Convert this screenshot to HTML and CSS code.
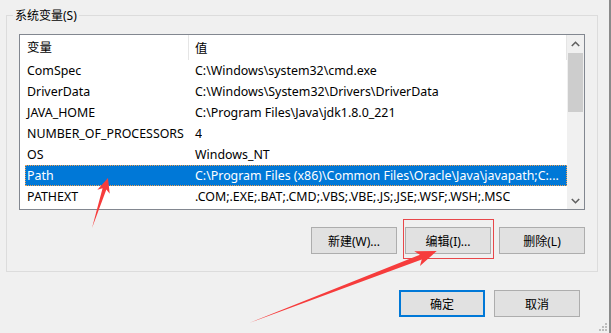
FILE: index.html
```html
<!DOCTYPE html>
<html lang="zh-CN">
<head>
    <meta charset="UTF-8">
    <title>系统变量</title>
    <link rel="stylesheet" href="styles.css">
</head>
<body>
<div class="window">
    <div class="group">
        <div class="group-title">系统变量(S)</div>

        <div class="listbox">
            <div class="list-main">
                <div class="list-head">
                    <div class="col-name">变量</div>
                    <div class="col-value">值</div>
                </div>
                <div class="rows">
                    <div class="row"><div class="col-name">ComSpec</div><div class="col-value">C:\Windows\system32\cmd.exe</div></div>
                    <div class="row"><div class="col-name">DriverData</div><div class="col-value">C:\Windows\System32\Drivers\DriverData</div></div>
                    <div class="row"><div class="col-name">JAVA_HOME</div><div class="col-value">C:\Program Files\Java\jdk1.8.0_221</div></div>
                    <div class="row"><div class="col-name">NUMBER_OF_PROCESSORS</div><div class="col-value">4</div></div>
                    <div class="row"><div class="col-name">OS</div><div class="col-value">Windows_NT</div></div>
                    <div class="row selected"><div class="col-name">Path</div><div class="col-value">C:\Program Files (x86)\Common Files\Oracle\Java\javapath;C:...</div></div>
                    <div class="row"><div class="col-name">PATHEXT</div><div class="col-value">.COM;.EXE;.BAT;.CMD;.VBS;.VBE;.JS;.JSE;.WSF;.WSH;.MSC</div></div>
                </div>
            </div>
            <div class="scrollbar">
                <div class="sb-btn">
                    <svg width="9" height="6" viewBox="0 0 9 6"><polyline points="0.8,5 4.5,1.3 8.2,5" fill="none" stroke="#606060" stroke-width="1.6"/></svg>
                </div>
                <div class="sb-track"><div class="sb-thumb"></div></div>
                <div class="sb-btn">
                    <svg width="9" height="6" viewBox="0 0 9 6"><polyline points="0.8,1 4.5,4.7 8.2,1" fill="none" stroke="#606060" stroke-width="1.6"/></svg>
                </div>
            </div>
        </div>

        <div class="group-buttons">
            <button class="btn">新建(W)...</button>
            <button class="btn">编辑(I)...</button>
            <button class="btn">删除(L)</button>
        </div>
    </div>

    <div class="dialog-buttons">
        <button class="btn btn-default">确定</button>
        <button class="btn">取消</button>
    </div>

    <svg class="grip" width="9" height="9" viewBox="0 0 9 9">
        <rect x="6" y="0" width="2" height="2" fill="#bcbcbc"/>
        <rect x="3" y="3" width="2" height="2" fill="#bcbcbc"/>
        <rect x="6" y="3" width="2" height="2" fill="#bcbcbc"/>
        <rect x="0" y="6" width="2" height="2" fill="#bcbcbc"/>
        <rect x="3" y="6" width="2" height="2" fill="#bcbcbc"/>
        <rect x="6" y="6" width="2" height="2" fill="#bcbcbc"/>
    </svg>

    <!-- annotation layer -->
    <svg class="marks" width="611" height="333" viewBox="0 0 611 333">
        <rect x="403.5" y="219.5" width="90" height="39" fill="none" stroke="#e8474a" stroke-width="1"/>
        <path transform="translate(92 228) rotate(-72.3)" d="M0,0 L41,-2 L38,-6.5 L52.5,0 L38,6.5 L41,2 Z" fill="#f63c3c"/>
        <path transform="translate(249 323) rotate(-20.96)" d="M0,0 L184,-2.6 L180,-8 L201,0 L180,8 L184,2.6 Z" fill="#f63c3c"/>
    </svg>
</div>
</body>
</html>
```

FILE: styles.css
```css
body {
    margin: 0;
    background: #f0f0f0;
    font-family: "Noto Sans", "Noto Sans CJK SC", sans-serif;
    font-size: 12px;
    color: #000;
}

.window {
    position: relative;
    width: 609px;
    height: 333px;
    border-right: 2px solid #8a8a8a;
    overflow: hidden;
}

.group {
    margin: 15px 11px 0 6px;
    height: 255px;
    padding: 0 12px;
    border: 1px solid #dcdcdc;
}

.group-title {
    width: fit-content;
    margin: -9px 0 0 -6px;
    padding: 0 2px;
    line-height: 17px;
    background: #f0f0f0;
}

.listbox {
    margin-top: 10px;
    height: 174px;
    border: 1px solid #828790;
    background: #fff;
    display: flex;
    font-size: 12.4px;
}

.list-main {
    flex: 1;
    overflow: hidden;
}

.list-head {
    display: flex;
    height: 25px;
    align-items: center;
    border-right: 1px solid #e5e5e5;
}

.list-head .col-name {
    width: 161px;
    padding-left: 7px;
    line-height: 25px;
    border-right: 1px solid #e5e5e5;
}

.list-head .col-value {
    padding-left: 6px;
}

.rows {
    margin-left: 5px;
}

.row {
    display: flex;
    height: 21px;
    line-height: 21px;
    white-space: nowrap;
}

.row .col-name {
    width: 161px;
    padding-left: 2px;
    flex-shrink: 0;
}

.row .col-value {
    padding-left: 7px;
    overflow: hidden;
}

.row.selected {
    background: #0078d7;
    color: #fff;
    outline: 1px dotted #f0a050;
    outline-offset: -1px;
}

.scrollbar {
    width: 17px;
    background: #f0f0f0;
    display: flex;
    flex-direction: column;
}

.sb-btn {
    height: 17px;
    display: flex;
    align-items: center;
    justify-content: center;
}

.sb-track {
    flex: 1;
}

.sb-thumb {
    margin: 1px 1px 0 1px;
    height: 59px;
    background: #cdcdcd;
}

.group-buttons {
    display: flex;
    justify-content: flex-end;
    gap: 8px;
    margin-top: 17px;
}

.btn {
    width: 86px;
    height: 27px;
    padding: 0;
    background: #e1e1e1;
    border: 1px solid #adadad;
    font-family: inherit;
    font-size: 12px;
    color: #000;
}

.btn-default {
    border: 2px solid #0078d7;
}

.dialog-buttons {
    display: flex;
    justify-content: flex-end;
    gap: 9px;
    margin-top: 18px;
    padding-right: 29px;
}

.grip {
    position: absolute;
    right: 1px;
    bottom: 1px;
}

.marks {
    position: absolute;
    left: 0;
    top: 0;
    pointer-events: none;
}
```
